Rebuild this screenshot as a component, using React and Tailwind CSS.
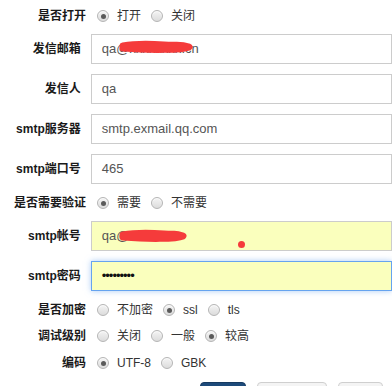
import React from "react";

const FONT = { fontFamily: '"Liberation Sans", "Noto Sans CJK SC", sans-serif' };

function Radio({ checked }) {
  return (
    <span className="relative inline-flex w-[12px] h-[12px] shrink-0 items-center justify-center rounded-full border border-[#b5b5b5] bg-gradient-to-b from-[#f4f4f4] to-[#dcdcdc] shadow-[inset_0_1px_1px_rgba(255,255,255,0.8)]">
      {checked && <span className="w-[5px] h-[5px] rounded-full bg-[#5a5a5a]" />}
    </span>
  );
}

function RadioRow({ label, options, value, className }) {
  return (
    <div className={"flex items-center " + className}>
      <div className="w-[86px] text-right text-[12px] font-bold text-[#1a1a1a]">{label}</div>
      <div className="flex items-center pl-[11px]">
        {options.map((o) => (
          <label key={o} className="flex items-center mr-[10px]">
            <Radio checked={o === value} />
            <span className="ml-[8px] text-[12px] text-[#333]">{o}</span>
          </label>
        ))}
      </div>
    </div>
  );
}

// red marker over private text
function Scribble({ width, top }) {
  return (
    <svg className="absolute left-[26px]" style={{ top }} width={width} height="14" viewBox={`0 0 ${width} 14`}>
      <path
        d={`M5 6 C 16 4, 32 4, 46 5 S ${width - 14} 4, ${width - 5} 7 C ${width - 12} 10, 30 10, 5 8 Z`}
        fill="#f53b3b"
        stroke="#f53b3b"
        strokeWidth="7"
        strokeLinecap="round"
        strokeLinejoin="round"
      />
    </svg>
  );
}

function InputRow({ label, value, className, autofill, focused, scribble, scribbleTop, dot }) {
  let box = "border-[#cccccc] bg-white";
  if (autofill) box = "border-[#cccccc] bg-[#faffbd]";
  if (focused)
    box = "border-[#66a3ef] bg-[#faffbd] shadow-[0_0_6px_rgba(102,163,239,0.55)]";
  return (
    <div className={"flex items-center h-[30px] " + className}>
      <div className="w-[86px] text-right text-[12px] font-bold text-[#1a1a1a]">{label}</div>
      <div className={"relative ml-[10px] w-[320px] h-[30px] border flex items-center pl-[10px] text-[13px] text-[#555] " + box}>
        <span className={focused ? "text-[#111] tracking-[-1px]" : ""}>{value}</span>
        {scribble && <Scribble width={scribble} top={scribbleTop} />}
        {dot && <span className="absolute left-[146px] top-[19px] w-[7px] h-[7px] rounded-full bg-[#f53b3b]" />}
      </div>
    </div>
  );
}

export default function App() {
  return (
    <div className="w-[392px] h-[386px] overflow-hidden bg-white" style={FONT}>
      <div className="flex flex-col">
        <RadioRow className="mt-[4px] h-[24px]" label="是否打开" options={["打开", "关闭"]} value="打开" />
        <InputRow className="mt-[6px]" label="发信邮箱" value="qa@xxxxxxxx.cn" scribble={76} scribbleTop={5} />
        <InputRow className="mt-[10px]" label="发信人" value="qa" />
        <InputRow className="mt-[10px]" label="smtp服务器" value="smtp.exmail.qq.com" />
        <InputRow className="mt-[10px]" label="smtp端口号" value="465" />
        <RadioRow className="mt-[7px] h-[24px]" label="是否需要验证" options={["需要", "不需要"]} value="需要" />
        <InputRow className="mt-[6px]" label="smtp帐号" value="qa@xxxxxxx" autofill scribble={70} scribbleTop={7} dot />
        <InputRow className="mt-[10px]" label="smtp密码" value="•••••••••" focused />
        <RadioRow className="mt-[6px] h-[26px]" label="是否加密" options={["不加密", "ssl", "tls"]} value="ssl" />
        <RadioRow className="h-[26px]" label="调试级别" options={["关闭", "一般", "较高"]} value="较高" />
        <RadioRow className="mt-[1px] h-[26px]" label="编码" options={["UTF-8", "GBK"]} value="UTF-8" />
        <div className="mt-[6px] flex pl-[200px] gap-[11px]">
          <button className="w-[46px] h-[30px] rounded-[4px] bg-[#1d4a7a] border border-[#163a61]" />
          <button className="w-[70px] h-[30px] rounded-[4px] bg-[#f4f4f4] border border-[#cfcfcf]" />
          <button className="w-[45px] h-[30px] rounded-[4px] bg-[#f4f4f4] border border-[#cfcfcf]" />
        </div>
      </div>
    </div>
  );
}
